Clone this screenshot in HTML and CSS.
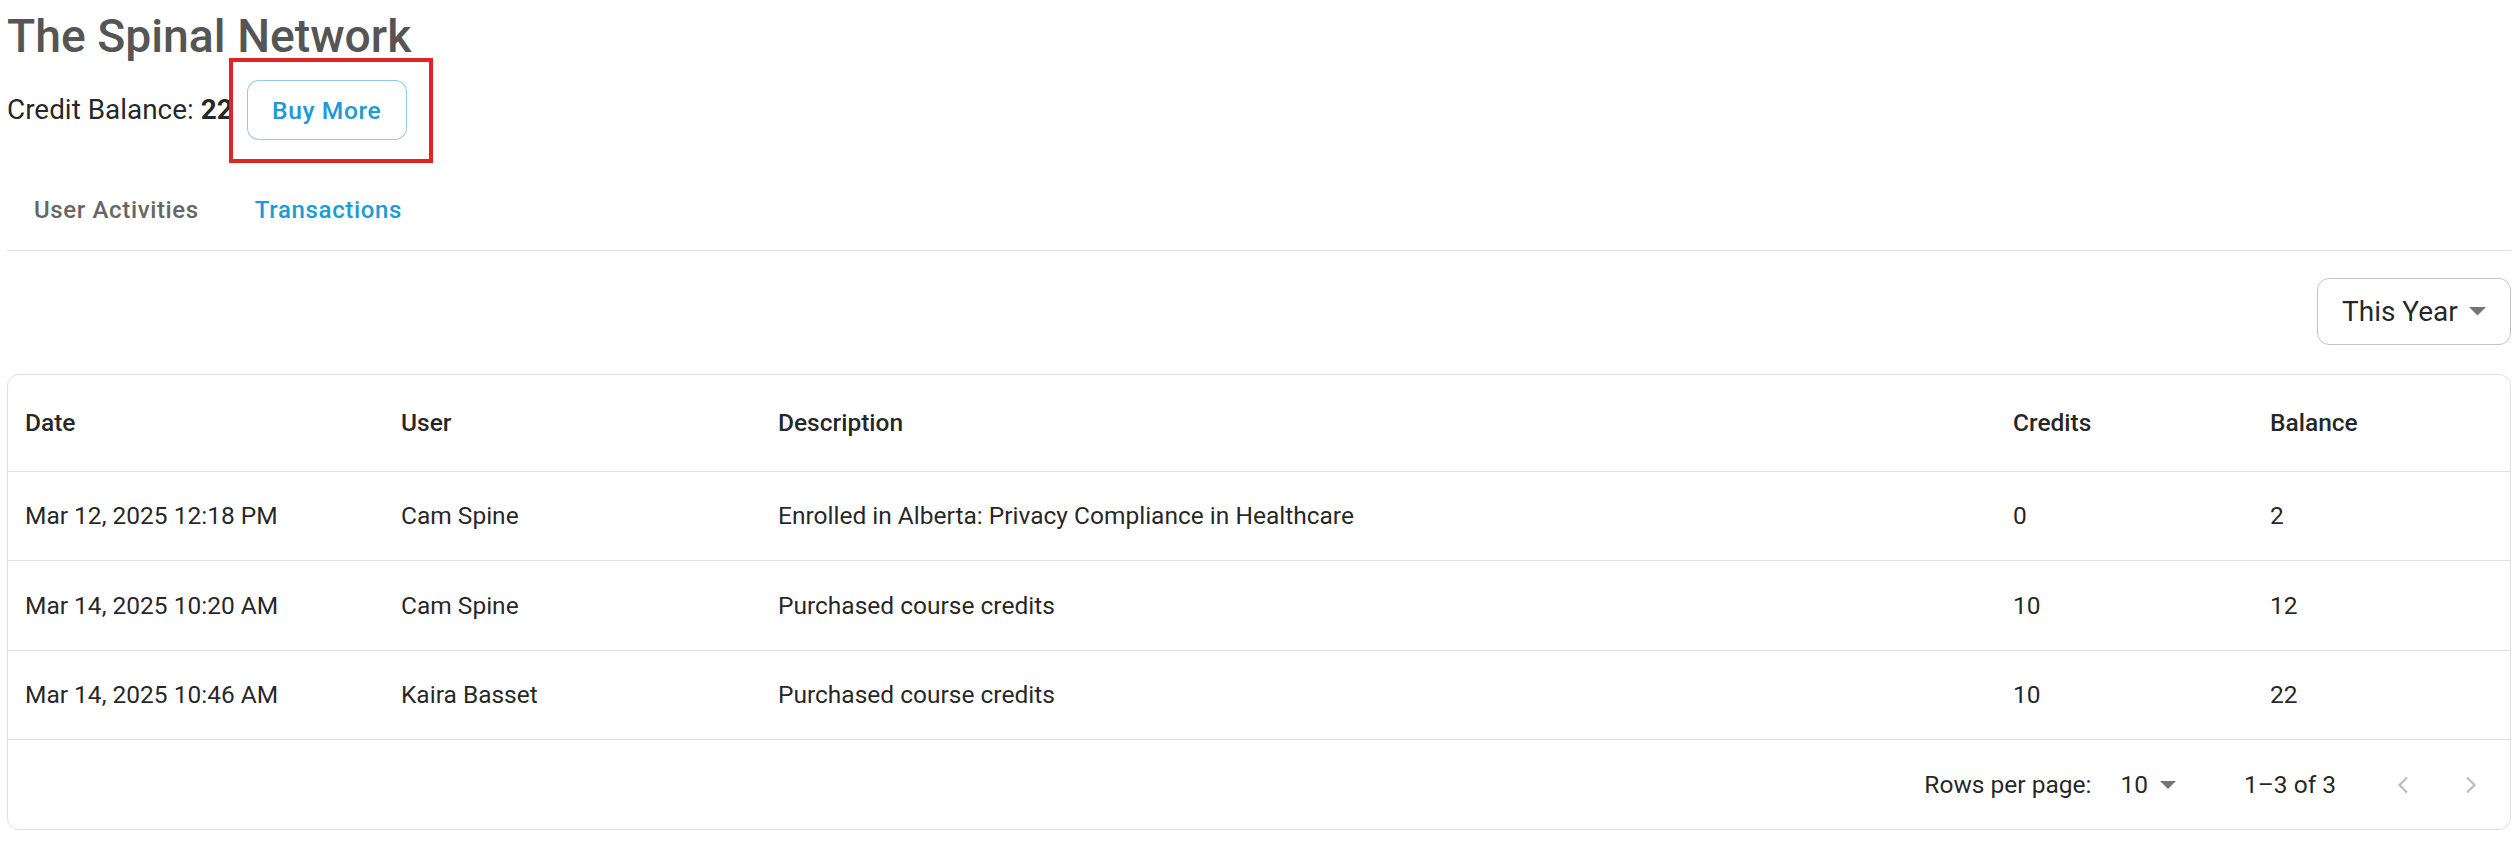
FILE: index.html
```html
<!DOCTYPE html>
<html>
<head>
<meta charset="utf-8">
<link rel="stylesheet" href="styles.css">
</head>
<body>
<div class="page">
  <h1 class="title">The Spinal Network</h1>
  <div class="balance-row">
    <span class="balance">Credit Balance: <b>22</b></span>
    <button class="buy">Buy More</button>
    <div class="highlight"></div>
  </div>
  <div class="tabs">
    <div class="tab">User Activities</div>
    <div class="tab active">Transactions</div>
  </div>
  <div class="toolbar">
    <div class="select">
      <span>This Year</span>
      <svg class="caret" width="17" height="9" viewBox="0 0 17 9"><path d="M0 0 L17 0 L8.5 8.5 Z" fill="#757575"/></svg>
    </div>
  </div>
  <div class="card">
    <table class="grid">
      <colgroup>
        <col class="c-date"><col class="c-user"><col class="c-desc"><col class="c-cred"><col class="c-bal">
      </colgroup>
      <thead>
        <tr><th>Date</th><th>User</th><th>Description</th><th>Credits</th><th>Balance</th></tr>
      </thead>
      <tbody>
        <tr><td>Mar 12, 2025 12:18 PM</td><td>Cam Spine</td><td>Enrolled in Alberta: Privacy Compliance in Healthcare</td><td>0</td><td>2</td></tr>
        <tr><td>Mar 14, 2025 10:20 AM</td><td>Cam Spine</td><td>Purchased course credits</td><td>10</td><td>12</td></tr>
        <tr><td>Mar 14, 2025 10:46 AM</td><td>Kaira Basset</td><td>Purchased course credits</td><td>10</td><td>22</td></tr>
      </tbody>
    </table>
    <div class="pager">
      <span class="rpp">Rows per page:</span>
      <span class="rpp-val">10</span>
      <svg class="caret small" width="16" height="8" viewBox="0 0 16 8"><path d="M0 0 L16 0 L8 8 Z" fill="#757575"/></svg>
      <span class="range">1–3 of 3</span>
      <svg class="chev" width="12" height="18" viewBox="0 0 12 18"><path d="M10 1.5 L2.5 9 L10 16.5" fill="none" stroke="#bdbdbd" stroke-width="2.2"/></svg>
      <svg class="chev next" width="12" height="18" viewBox="0 0 12 18"><path d="M2 1.5 L9.5 9 L2 16.5" fill="none" stroke="#bdbdbd" stroke-width="2.2"/></svg>
    </div>
  </div>
</div>
</body>
</html>
```

FILE: styles.css
```css
* { box-sizing: border-box; }
html, body { margin: 0; padding: 0; background: #fff; }
body { font-family: Roboto, "Noto Sans", "Liberation Sans", sans-serif; color: rgba(0,0,0,0.87); }
.page { padding: 0 6px 0 7px; position: relative; }
.title {
  margin: 0;
  font-size: 46.3px;
  font-weight: 500;
  color: #555555;
  line-height: 72px;
  height: 70px;
}
.balance-row {
  display: flex;
  align-items: center;
  height: 80px;
  position: relative;
}
.balance { font-size: 27.9px; line-height: 1; }
.balance b { font-weight: 700; }
.buy {
  margin-left: 14px;
  height: 60px;
  width: 160px;
  border: 1px solid rgba(30,154,214,0.5);
  border-radius: 12px;
  background: #fff;
  color: #1e9ad6;
  font-family: Roboto, sans-serif;
  font-size: 24.6px;
  font-weight: 500;
  letter-spacing: 0.6px;
  padding: 0;
}
.highlight {
  position: absolute;
  left: 222px;
  top: -12px;
  width: 204px;
  height: 105px;
  border: 4px solid #e02424;
  pointer-events: none;
}
.tabs {
  display: flex;
  height: 101px;
  padding-top: 20px;
  border-bottom: 1px solid #e0e0e0;
}
.tab {
  height: 80px;
  display: flex;
  align-items: center;
  padding: 0 27px 0 27px;
  font-size: 24px;
  font-weight: 500;
  letter-spacing: 0.64px;
  color: #666666;
}
.tab.active { color: #1e9ad6; padding-left: 29px; }
.toolbar {
  display: flex;
  justify-content: flex-end;
  padding-top: 27px;
}
.select {
  width: 194px;
  height: 67px;
  border: 1px solid #c4c4c4;
  border-radius: 12px;
  display: flex;
  align-items: center;
  padding: 0 24px 0 24px;
  font-size: 28px;
  color: rgba(0,0,0,0.87);
  justify-content: space-between;
}
.card {
  margin-top: 29px;
  border: 1px solid #e0e0e0;
  border-radius: 12px;
  overflow: hidden;
}
.grid { width: 100%; border-collapse: collapse; table-layout: fixed; }
.c-date { width: 376px; }
.c-user { width: 377px; }
.c-desc { width: 1235px; }
.c-cred { width: 257px; }
.c-bal { width: auto; }
.grid th, .grid td {
  text-align: left;
  padding: 0 0 0 17px;
  font-size: 24.5px;
  border-bottom: 1px solid #e0e0e0;
  color: rgba(0,0,0,0.87);
}
.grid th { height: 96px; font-weight: 500; }
.grid td { height: 89.5px; font-weight: 400; }
.pager {
  height: 89px;
  display: flex;
  align-items: center;
  justify-content: flex-end;
  font-size: 24.5px;
  color: rgba(0,0,0,0.87);
  padding-right: 33px;
}
.rpp-val { margin-left: 29px; }
.caret.small { margin-left: 12px; }
.range { margin-left: 68px; }
.chev { margin-left: 61px; }
.chev.next { margin-left: 56px; }
```
